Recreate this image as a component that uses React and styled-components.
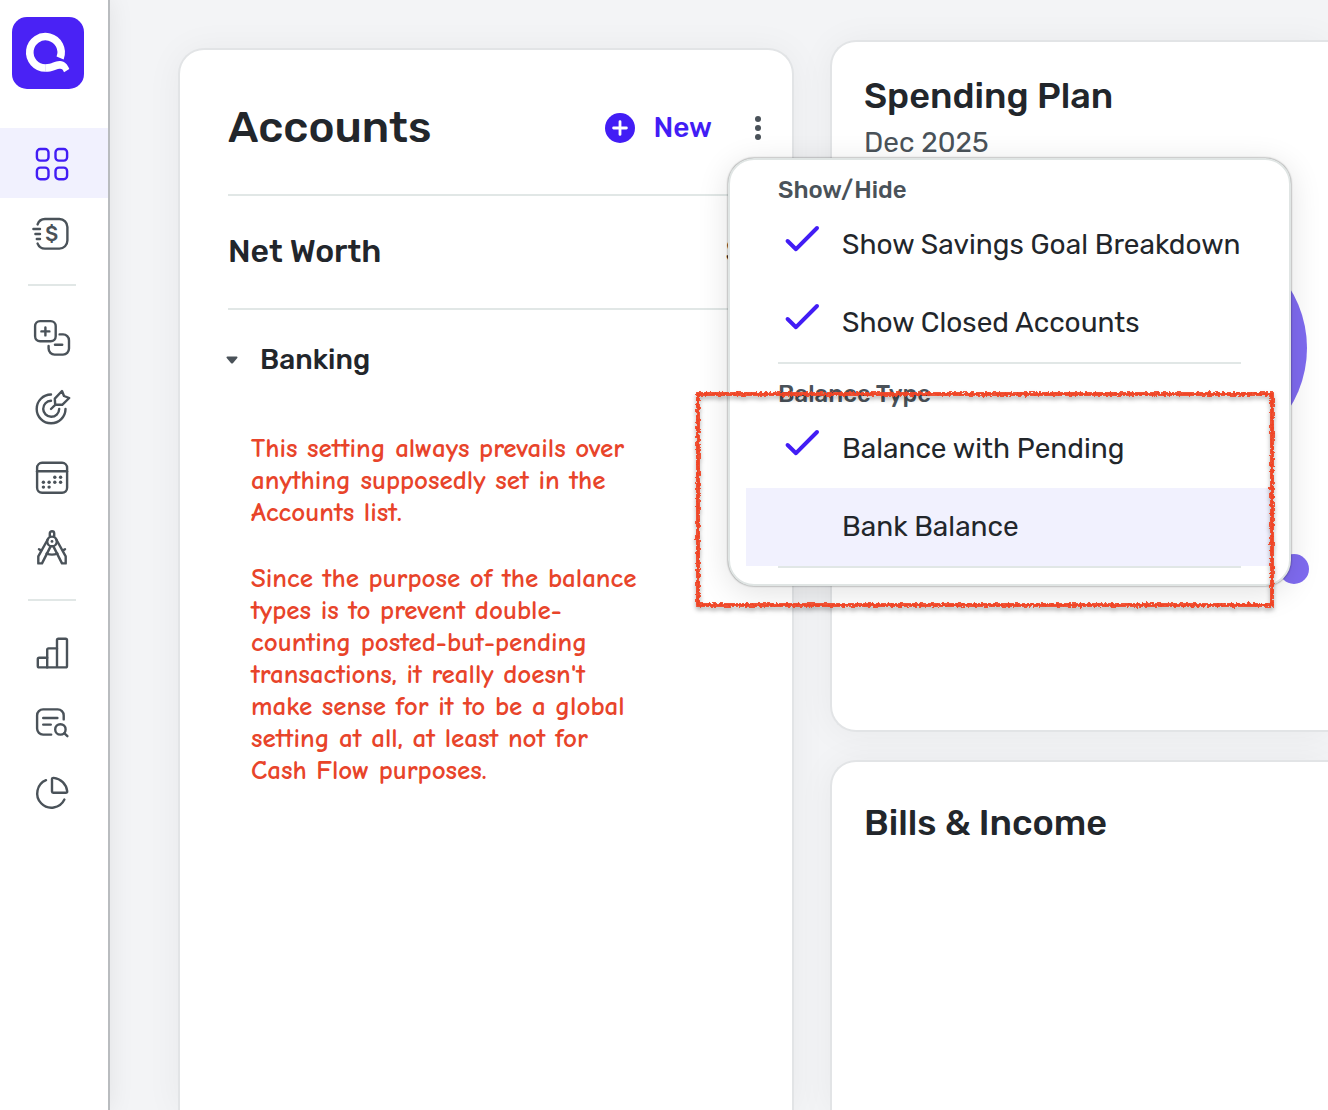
import React, { useState } from 'react'
import styled, { createGlobalStyle } from 'styled-components'

const GlobalStyle = createGlobalStyle`
  * {
    box-sizing: border-box;
  }

  body {
    margin: 0;
    background: #f3f4f6;
    color: #22262b;
    font-family: Rubik, Inter, sans-serif;
    overflow-x: hidden;
  }

  h1, h2, h3, p {
    margin: 0;
  }

  button {
    padding: 0;
    border: 0;
    background: none;
    color: inherit;
    font: inherit;
    cursor: pointer;
  }
`

const Logo = () => (
  <svg width="72" height="72" viewBox="0 0 72 72" fill="none">
    <rect width="72" height="72" rx="15" fill="#4a22f5" />
    <path
      d="M48.1 41A15.7 15.7 0 1 0 33.4 51"
      stroke="#fff"
      strokeWidth="7.6"
    />
    <path
      d="M33.2 47.2C40 47.2 43 43.8 48 44C53 44.2 55.5 47.5 57.3 52L52 55.3C51 52.5 50 51.5 47.5 51.7C43 52.2 41 54.8 33.2 54.8Z"
      fill="#fff"
    />
  </svg>
)

const Icon = ({ children }) => (
  <svg
    width="40"
    height="40"
    viewBox="0 0 40 40"
    fill="none"
    stroke="currentColor"
    strokeWidth="2.4"
    strokeLinecap="round"
    strokeLinejoin="round"
    aria-hidden="true"
  >
    {children}
  </svg>
)

const DashboardIcon = () => (
  <Icon>
    <rect x="4.9" y="6" width="11.6" height="11.6" rx="3.4" />
    <rect x="23.5" y="6" width="11.6" height="11.6" rx="3.4" />
    <rect x="4.9" y="24.6" width="11.6" height="11.6" rx="3.4" />
    <rect x="23.5" y="24.6" width="11.6" height="11.6" rx="3.4" />
  </Icon>
)

const SpendingIcon = () => (
  <Icon>
    <path d="M5.6 11.4A8 8 0 0 1 13 6H27.4a8 8 0 0 1 8 8V27.6a8 8 0 0 1-8 8H13A8 8 0 0 1 5.6 30.6" />
    <path d="M1.4 16H8M3.4 21H8M4.8 26H8" />
    <text
      x="19.8"
      y="28.2"
      textAnchor="middle"
      fontSize="20"
      fontWeight="500"
      fontFamily="Rubik, Inter, sans-serif"
      fill="currentColor"
      stroke="none"
    >
      $
    </text>
  </Icon>
)

const TransactionsIcon = () => (
  <Icon>
    <rect x="3.1" y="3.1" width="20.6" height="20.2" rx="5" />
    <path d="M13.4 9.4v8M9.4 13.4h8" />
    <path d="M27.6 16.4H31a6 6 0 0 1 6 6V30.6a6 6 0 0 1-6 6H22.6a6 6 0 0 1-6-6V28" />
    <path d="M23 26.8h7.2" />
  </Icon>
)

const GoalsIcon = () => (
  <Icon>
    <path d="M19 6.5A14.4 14.4 0 1 0 33.5 21" />
    <path d="M19 12.8A8 8 0 1 0 27.2 21" />
    <path d="M19 21L23.2 16.8M23.2 16.8L22.8 10.6L30 3L32 8L37.2 10L30.2 16.8Z" />
  </Icon>
)

const CalendarIcon = () => (
  <Icon>
    <rect x="5.1" y="4.8" width="30" height="30" rx="5" />
    <path d="M5.1 13.3H35" />
    <g fill="currentColor" stroke="none">
      <circle cx="22.8" cy="19.3" r="1.7" />
      <circle cx="28.6" cy="19.3" r="1.7" />
      <circle cx="11.4" cy="24.2" r="1.7" />
      <circle cx="17.1" cy="24.2" r="1.7" />
      <circle cx="22.8" cy="24.2" r="1.7" />
      <circle cx="28.6" cy="24.2" r="1.7" />
      <circle cx="11.4" cy="29.1" r="1.7" />
      <circle cx="17.1" cy="29.1" r="1.7" />
    </g>
  </Icon>
)

const PlannerIcon = () => (
  <Icon>
    <path d="M17.8 8.6V5.4a2.2 2.2 0 0 1 4.4 0V8.6" />
    <circle cx="20" cy="13.4" r="4.8" />
    <circle cx="20" cy="13.4" r="1.4" fill="currentColor" stroke="none" />
    <path d="M16 11L6.3 28.4V35.4H10L18.6 18.4" />
    <path d="M24 11L33.7 28.4V35.4H30L21.4 18.4" />
    <path d="M7 21.2L9 22.4M33 21.2L31 22.4M14.6 25.6Q20 27.6 25.4 25.6" />
  </Icon>
)

const BarsIcon = () => (
  <Icon>
    <path d="M15.2 24.8H7.2Q5.8 24.8 5.8 26.2V33Q5.8 34.4 7.2 34.4H33.6Q35 34.4 35 33V7.2Q35 5.8 33.6 5.8H26.4Q25 5.8 25 7.2V34.4" />
    <path d="M25 15.4H16.6Q15.2 15.4 15.2 16.8V34.4" />
  </Icon>
)

const ReportsIcon = () => (
  <Icon>
    <path d="M31.7 16.4V12.4a6 6 0 0 0-6-6H11.1a6 6 0 0 0-6 6V25.6a6 6 0 0 0 6 6H19.2" />
    <path d="M11.2 15H25.4M11.2 21.6H18.8" />
    <circle cx="28.4" cy="26.4" r="5.2" />
    <path d="M32.2 30.2L35.4 33.2" />
  </Icon>
)

const PieIcon = () => (
  <Icon>
    <path d="M14 7.2A14.3 14.3 0 1 0 32.4 26.6" />
    <path d="M20 6.2Q20 4.8 21.6 4.9A15 15 0 0 1 35.2 18.2Q35.3 19.8 33.8 19.8H21.2Q20 19.8 20 18.6Z" />
  </Icon>
)

const PlusCircle = () => (
  <svg width="30" height="30" viewBox="0 0 30 30" aria-hidden="true">
    <circle cx="15" cy="15" r="15" fill="#421df5" />
    <path
      d="M15 8.6v12.8M8.6 15h12.8"
      stroke="#fff"
      strokeWidth="2.8"
      strokeLinecap="round"
    />
  </svg>
)

const Kebab = () => (
  <svg width="28" height="28" viewBox="0 0 28 28" fill="#4a5259" aria-hidden="true">
    <circle cx="14" cy="5" r="3" />
    <circle cx="14" cy="14" r="3" />
    <circle cx="14" cy="23" r="3" />
  </svg>
)

const Check = () => (
  <svg width="36" height="28" viewBox="0 0 36 28" fill="none" aria-hidden="true">
    <path
      d="M3.6 16L12 24.2L33 3"
      stroke="#421df5"
      strokeWidth="4"
      strokeLinecap="round"
      strokeLinejoin="round"
    />
  </svg>
)

const navGroups = [
  [
    { label: 'Dashboard', icon: DashboardIcon },
    { label: 'Spending', icon: SpendingIcon }
  ],
  [
    { label: 'Transactions', icon: TransactionsIcon },
    { label: 'Goals', icon: GoalsIcon },
    { label: 'Calendar', icon: CalendarIcon },
    { label: 'Planner', icon: PlannerIcon }
  ],
  [
    { label: 'Trends', icon: BarsIcon },
    { label: 'Reports', icon: ReportsIcon },
    { label: 'Investments', icon: PieIcon }
  ]
]

function Sidebar() {
  return (
    <Side>
      <Home href="#home" aria-label="Home">
        <Logo />
      </Home>
      {navGroups.map((items, i) => (
        <NavGroup key={i}>
          {items.map(({ label, icon: NavIcon }) => (
            <NavLink
              key={label}
              href={`#${label.toLowerCase()}`}
              aria-label={label}
              $active={label === 'Dashboard'}
            >
              <NavIcon />
            </NavLink>
          ))}
        </NavGroup>
      ))}
    </Side>
  )
}

function DisplayMenu() {
  const [savings, setSavings] = useState(true)
  const [closed, setClosed] = useState(true)
  const [balance, setBalance] = useState('pending')

  return (
    <Menu>
      <MenuHeading>Show/Hide</MenuHeading>
      <Option>
        <HiddenInput
          type="checkbox"
          checked={savings}
          onChange={() => setSavings(!savings)}
        />
        <Tick>{savings && <Check />}</Tick>
        Show Savings Goal Breakdown
      </Option>
      <Option>
        <HiddenInput
          type="checkbox"
          checked={closed}
          onChange={() => setClosed(!closed)}
        />
        <Tick>{closed && <Check />}</Tick>
        Show Closed Accounts
      </Option>
      <MenuRule />
      <MenuHeading>Balance Type</MenuHeading>
      <Option>
        <HiddenInput
          type="radio"
          name="balance"
          checked={balance === 'pending'}
          onChange={() => setBalance('pending')}
        />
        <Tick>{balance === 'pending' && <Check />}</Tick>
        Balance with Pending
      </Option>
      <Option $highlighted>
        <HiddenInput
          type="radio"
          name="balance"
          checked={balance === 'bank'}
          onChange={() => setBalance('bank')}
        />
        <Tick>{balance === 'bank' && <Check />}</Tick>
        Bank Balance
      </Option>
      <MenuRule />
      <Marker viewBox="0 0 584 222" aria-hidden="true">
        <filter id="crayon" x="-5%" y="-5%" width="110%" height="110%">
          <feTurbulence type="fractalNoise" baseFrequency="0.35" numOctaves="2" seed="4" />
          <feDisplacementMap
            in="SourceGraphic"
            scale="5"
            xChannelSelector="R"
            yChannelSelector="G"
          />
        </filter>
        <rect
          x="4"
          y="4"
          width="574"
          height="211"
          fill="none"
          stroke="#f04426"
          strokeWidth="3.8"
          filter="url(#crayon)"
        />
      </Marker>
    </Menu>
  )
}

function Accounts() {
  return (
    <AccountsCard>
      <AccountsHeader>
        <h1>Accounts</h1>
        <NewButton>
          <PlusCircle />
          New
        </NewButton>
        <MenuAnchor>
          <KebabButton aria-label="Account options">
            <Kebab />
          </KebabButton>
          <DisplayMenu />
        </MenuAnchor>
      </AccountsHeader>
      <NetWorth>
        <span>Net Worth</span>
        <span>$</span>
      </NetWorth>
      <Group>
        <svg width="12" height="8" viewBox="0 0 12 8" aria-hidden="true">
          <path
            d="M1.4 1.4H10.6L6.4 6.4Q6 6.8 5.6 6.4Z"
            fill="#4a5259"
            stroke="#4a5259"
            strokeWidth="1.8"
            strokeLinejoin="round"
          />
        </svg>
        Banking
      </Group>
      <Note>
        <p>
          This setting always prevails over
          <br />
          anything supposedly set in the
          <br />
          Accounts list.
        </p>
        <p>
          Since the purpose of the balance
          <br />
          types is to prevent double-
          <br />
          counting posted-but-pending
          <br />
          transactions, it really doesn't
          <br />
          make sense for it to be a global
          <br />
          setting at all, at least not for
          <br />
          Cash Flow purposes.
        </p>
      </Note>
    </AccountsCard>
  )
}

function App() {
  return (
    <Shell>
      <GlobalStyle />
      <Sidebar />
      <Main>
        <Accounts />
        <Column>
          <SpendingCard>
            <h2>Spending Plan</h2>
            <Period>Dec 2025</Period>
            <Chart viewBox="0 0 226 226" aria-hidden="true">
              <circle cx="113" cy="113" r="113" fill="#7f6bf0" />
            </Chart>
            <LegendDot />
          </SpendingCard>
          <BillsCard>
            <h2>Bills &amp; Income</h2>
          </BillsCard>
        </Column>
      </Main>
    </Shell>
  )
}

const Shell = styled.div`
  display: flex;
  min-height: 100vh;
  overflow: hidden;
`

const Side = styled.nav`
  flex: none;
  width: 110px;
  background: #fff;
  border-right: 2px solid #b9bcbf;
  box-shadow: 0 0 24px rgba(0, 0, 0, 0.08);
`

const Home = styled.a`
  display: block;
  height: 128px;
  padding: 17px 12px 0;
`

const NavGroup = styled.div`
  & + &::before {
    content: '';
    display: block;
    width: 48px;
    height: 2px;
    margin: 16px 28px 17px;
    background: #e1e7e6;
  }
`

const NavLink = styled.a`
  display: flex;
  align-items: center;
  height: 70px;
  padding-left: 32px;
  color: ${props => (props.$active ? '#421df5' : '#4a5259')};
  background: ${props => (props.$active ? '#f1f1fe' : 'transparent')};
`

const Main = styled.main`
  flex: 1;
  min-width: 0;
  display: grid;
  grid-template-columns: minmax(0, 616fr) minmax(0, 498fr);
  gap: 36px;
  padding-left: 68px;
`

const Card = styled.section`
  background: #fff;
  border: 2px solid #e2e4e6;
  box-shadow: 0 2px 36px rgba(0, 0, 0, 0.05);

  h2 {
    font-size: 36px;
    line-height: 44px;
    font-weight: 500;
  }
`

const AccountsCard = styled(Card)`
  position: relative;
  z-index: 1;
  margin-top: 48px;
  padding: 0 48px;
  border-bottom: 0;
  border-radius: 26px 26px 0 0;
`

const AccountsHeader = styled.header`
  display: flex;
  align-items: center;
  height: 144px;
  margin-right: -28px;
  padding-top: 12px;

  h1 {
    flex: 1;
    padding-bottom: 2px;
    font-size: 44px;
    line-height: 52px;
    font-weight: 500;
  }
`

const NewButton = styled.button`
  display: flex;
  align-items: center;
  gap: 19px;
  margin-right: 32px;
  color: #421df5;
  font-size: 28px;
  line-height: 36px;
  font-weight: 500;
`

const MenuAnchor = styled.div`
  position: relative;
`

const KebabButton = styled.button`
  display: block;
  width: 28px;
  height: 28px;
`

const NetWorth = styled.div`
  display: flex;
  align-items: center;
  justify-content: space-between;
  height: 116px;
  margin-right: -2px;
  padding-bottom: 2px;
  border-top: 2px solid #e1e7e6;
  border-bottom: 2px solid #e1e7e6;
  font-size: 32px;
  line-height: 40px;
  font-weight: 500;
`

const Group = styled.h3`
  display: flex;
  align-items: center;
  gap: 22px;
  height: 100px;
  margin-left: -2px;
  font-size: 28px;
  line-height: 36px;
  font-weight: 500;
`

const Note = styled.div`
  display: grid;
  gap: 34px;
  padding: 23px 0 0 23px;
  color: #e8442a;
  font-family: Chalkboard, 'Comic Neue', 'Open Sans', sans-serif;
  font-size: 27px;
  line-height: 32px;
  font-weight: 700;
  white-space: nowrap;
`

const Menu = styled.div`
  position: absolute;
  top: 44px;
  left: -16px;
  width: 563px;
  padding: 0 16px 16px;
  background: #fff;
  border: 2px solid #e0e5e4;
  border-radius: 26px;
  box-shadow: 0 0 2px rgba(0, 0, 0, 0.6), 0 6px 32px rgba(0, 0, 0, 0.12);
`

const MenuHeading = styled.h3`
  height: 46px;
  padding: 14px 32px 0;
  color: #4a5259;
  font-size: 24px;
  line-height: 32px;
  font-weight: 500;
`

const Option = styled.label`
  display: flex;
  align-items: center;
  height: 78px;
  padding-left: 38px;
  background: ${props => (props.$highlighted ? '#f1f1fe' : 'transparent')};
  font-size: 28px;
  line-height: 36px;
  white-space: nowrap;
  cursor: pointer;
`

const HiddenInput = styled.input`
  appearance: none;
  width: 0;
  height: 0;
  margin: 0;
`

const Tick = styled.span`
  flex: none;
  width: 58px;
  height: 40px;
`

const MenuRule = styled.div`
  height: 2px;
  margin: 0 32px;
  background: #e1e7e6;
`

const Marker = styled.svg`
  position: absolute;
  top: 230px;
  left: -36px;
  width: 584px;
  height: 222px;
  filter: drop-shadow(0 3px 2px rgba(0, 0, 0, 0.3));
  pointer-events: none;
`

const Column = styled.div`
  display: flex;
  flex-direction: column;
  gap: 28px;
  padding-top: 40px;
`

const SpendingCard = styled(Card)`
  padding: 32px 0 146px 32px;
  border-right: 0;
  border-radius: 26px 0 0 26px;
`

const Period = styled.p`
  padding-top: 7px;
  color: #4a5259;
  font-size: 28px;
  line-height: 36px;
`

const Chart = styled.svg`
  display: block;
  width: 226px;
  height: 226px;
  margin: 74px 0 0 217px;
`

const LegendDot = styled.div`
  width: 30px;
  height: 30px;
  margin: 93px 0 0 415px;
  border-radius: 50%;
  background: #7f6bf0;
`

const BillsCard = styled(Card)`
  flex: 1;
  padding: 39px 0 0 32px;
  border-right: 0;
  border-bottom: 0;
  border-radius: 26px 0 0 0;
`

export default App
